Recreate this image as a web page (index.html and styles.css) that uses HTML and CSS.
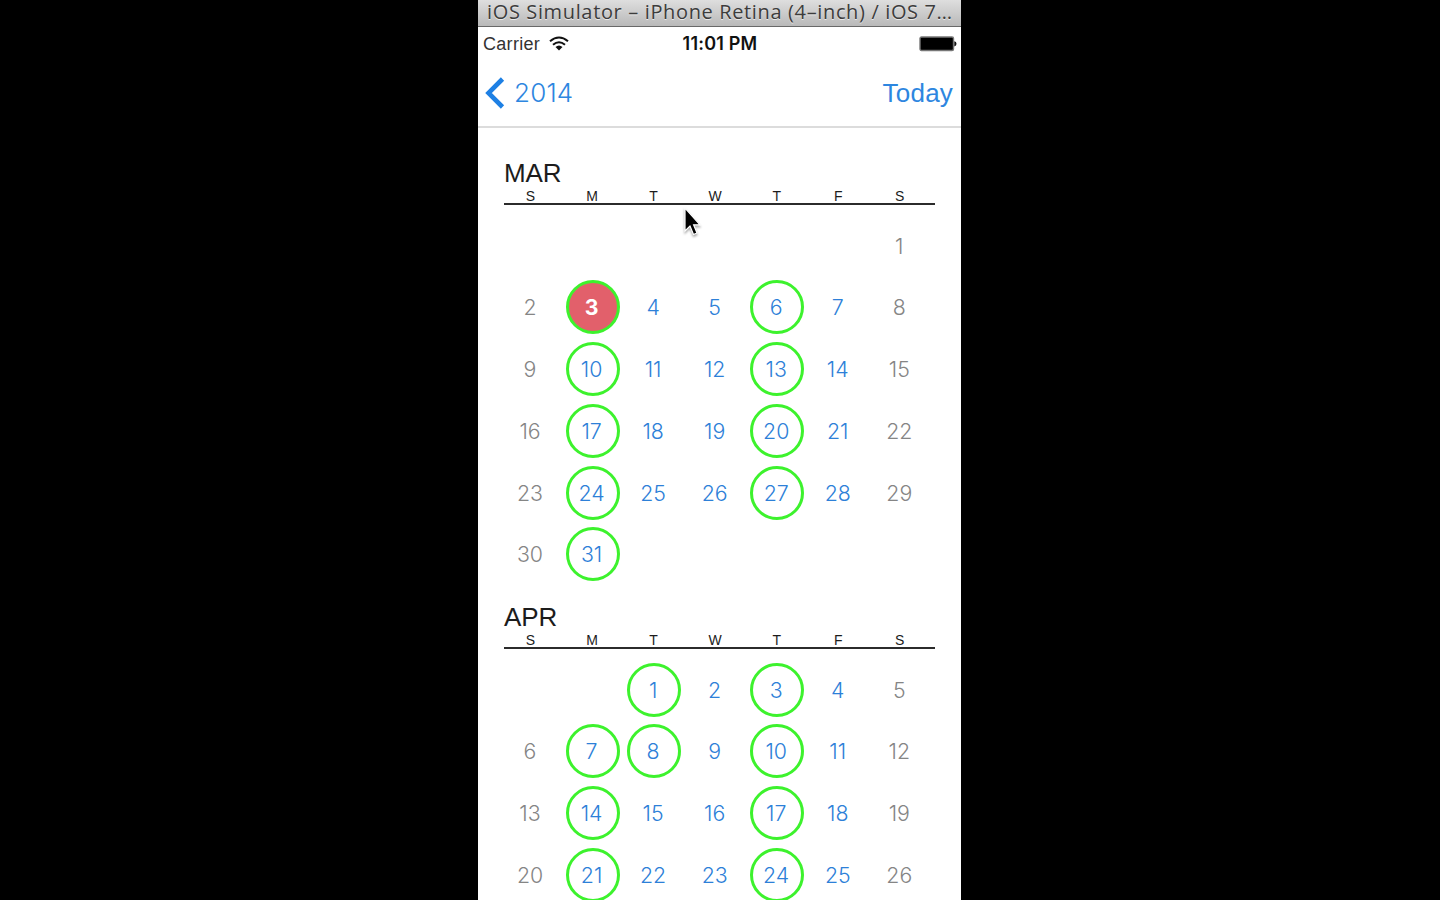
FILE: index.html
```html
<!DOCTYPE html>
<html lang="en">
<head>
<meta charset="utf-8">
<title>Calendar</title>
<link rel="stylesheet" href="styles.css">
</head>
<body>
<main class="phone">
  <header class="window-title"><span>iOS Simulator – iPhone Retina (4–inch) / iOS 7…</span></header>
  <div class="status">
    <div class="carrier"><span>Carrier</span>
      <svg class="wifi" viewBox="0 0 20 15"><path d="M1 5.2Q10-2.2 19 5.2M4 8.7Q10 3.8 16 8.7" fill="none" stroke="#111" stroke-width="2.1"/><path d="M6.5 11Q10 8 13.5 11L10 14.5Z" fill="#111"/></svg>
    </div>
    <div class="time">11:01 PM</div>
    <svg class="battery" viewBox="0 0 38 16"><rect x="1" y="1" width="33.5" height="13.5" rx="1.5" fill="#000" stroke="#777" stroke-width="1.4"/><path d="M35.3 5.2Q37.5 5.5 37.5 7.8T35.3 10.4Z" fill="#111"/></svg>
  </div>
  <nav class="nav">
    <a class="back"><svg class="chevron" viewBox="0 0 20 32"><path d="M17.5 2L3.5 16L17.5 30" fill="none" stroke="#1e80e4" stroke-width="4.6"/></svg><span>2014</span></a>
    <a class="today">Today</a>
  </nav>
  <section class="month">
    <h2>MAR</h2>
    <div class="week names"><b>S</b><b>M</b><b>T</b><b>W</b><b>T</b><b>F</b><b>S</b></div>
    <div class="days">
      <div class="week"><i></i><i></i><i></i><i></i><i></i><i></i><i>1</i></div>
      <div class="week"><i>2</i><i class="ring selected">3</i><i>4</i><i>5</i><i class="ring">6</i><i>7</i><i>8</i></div>
      <div class="week"><i>9</i><i class="ring">10</i><i>11</i><i>12</i><i class="ring">13</i><i>14</i><i>15</i></div>
      <div class="week"><i>16</i><i class="ring">17</i><i>18</i><i>19</i><i class="ring">20</i><i>21</i><i>22</i></div>
      <div class="week"><i>23</i><i class="ring">24</i><i>25</i><i>26</i><i class="ring">27</i><i>28</i><i>29</i></div>
      <div class="week"><i>30</i><i class="ring">31</i><i></i><i></i><i></i><i></i><i></i></div>
    </div>
  </section>
  <section class="month">
    <h2>APR</h2>
    <div class="week names"><b>S</b><b>M</b><b>T</b><b>W</b><b>T</b><b>F</b><b>S</b></div>
    <div class="days">
      <div class="week"><i></i><i></i><i class="ring">1</i><i>2</i><i class="ring">3</i><i>4</i><i>5</i></div>
      <div class="week"><i>6</i><i class="ring">7</i><i class="ring">8</i><i>9</i><i class="ring">10</i><i>11</i><i>12</i></div>
      <div class="week"><i>13</i><i class="ring">14</i><i>15</i><i>16</i><i class="ring">17</i><i>18</i><i>19</i></div>
      <div class="week"><i>20</i><i class="ring">21</i><i>22</i><i>23</i><i class="ring">24</i><i>25</i><i>26</i></div>
    </div>
  </section>
  <svg class="cursor" viewBox="0 0 20 32"><path d="M2 2V25L7 20L10.5 28.5L14 27L10.6 18.8H17Z" fill="#000" stroke="#fff" stroke-width="1.2"/></svg>
</main>
</body>
</html>
```

FILE: styles.css
```css
* { box-sizing: border-box; }
body { margin: 0; height: 900px; overflow: hidden; background: #000; font-family: "Liberation Sans", Arial, sans-serif; }
.phone { position: relative; width: 483px; height: 900px; margin-left: 478px; overflow: hidden; background: #fff; color: #1c1c1c; }
.window-title { height: 27px; padding-left: 9px; background: linear-gradient(#dedede, #b9b9b9); border-bottom: 1px solid #686868; color: #3c3c3c; font: 20px/23px "Open Sans", sans-serif; letter-spacing: .64px; white-space: nowrap; text-shadow: 0 1px 0 #e8e8e8; }
.status { display: grid; grid-template-columns: 1fr auto 1fr; align-items: center; height: 33px; padding: 0 4px 0 5px; }
.carrier { display: flex; align-items: center; gap: 9px; padding-top: 1px; font-size: 18px; color: #333; letter-spacing: .3px; }
.wifi { width: 20px; height: 15px; margin-top: -2px; }
.time { font: 600 18px "Inter", sans-serif; color: #111; letter-spacing: .2px; }
.battery { width: 38px; height: 16px; justify-self: end; }
.nav { display: flex; justify-content: space-between; align-items: center; height: 68px; padding: 0 8px 1px 7px; border-bottom: 2px solid #dcdcdc; color: #2d86e0; font-size: 26px; }
.back { display: flex; align-items: center; gap: 9px; font: 350 26px "Inter", sans-serif; letter-spacing: .2px; }
.chevron { width: 20px; height: 32px; }
.today { padding-top: 1px; letter-spacing: .2px; }
.month { height: 444px; padding: 29px 26px 0; }
h2 { margin: 0; height: 32px; font-size: 26px; line-height: 32px; font-weight: 400; letter-spacing: -.1px; }
.week { display: grid; grid-template-columns: repeat(7, 61.55px); }
.names { height: 16px; border-bottom: 2px solid #2b2b2b; font-size: 14px; line-height: 15px; }
.names b { width: 53px; font-weight: 400; text-align: center; }
.days { padding-top: 13.6px; }
.days .week { height: 61.75px; }
.days i { display: flex; align-items: center; justify-content: center; width: 54px; height: 54px; padding-right: 2px; font: 350 21.3px "Inter", sans-serif; letter-spacing: 0; color: #2d80d8; }
.days i:first-child, .days i:last-child { color: #858585; }
.days .ring { border: 3px solid #3df22d; border-radius: 50%; }
.days .selected { background: #e2606b; color: #fff; font-weight: 700; }
.cursor { position: absolute; left: 205px; top: 206px; width: 20px; height: 32px; filter: drop-shadow(0 2px 1px #0005); }
```
